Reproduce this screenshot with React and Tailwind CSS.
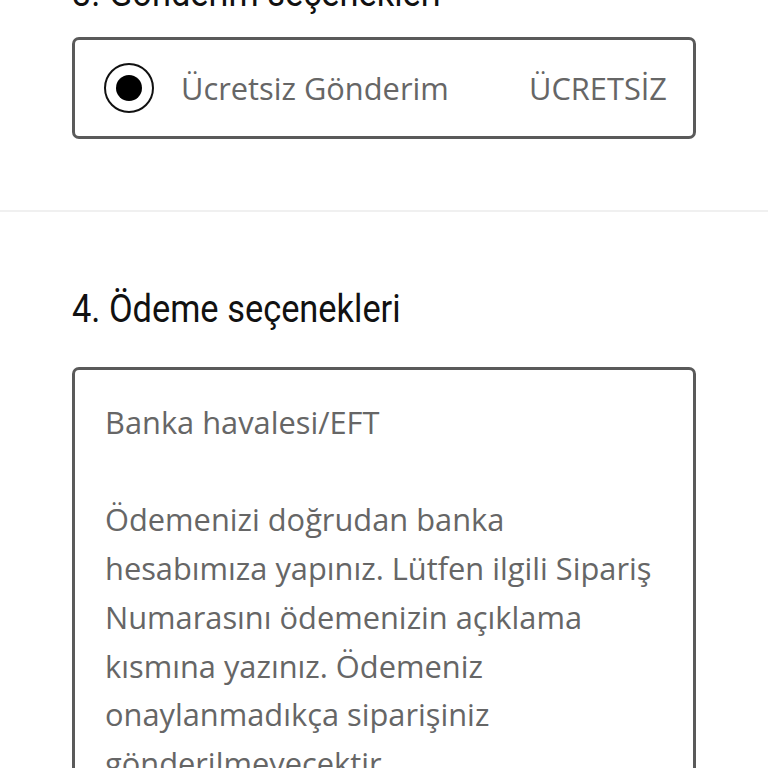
export default function App() {
  const body = { fontFamily: '"Open Sans", sans-serif' };
  const head = { fontFamily: 'Roboto, sans-serif' };
  return (
    <div className="w-[768px] h-[768px] overflow-hidden bg-white">
      <div className="px-[72px] -mt-[30px]">
        <h2 style={head} className="text-[38px] leading-[46px] text-[#111] origin-left scale-x-[0.905] whitespace-nowrap">3. Gönderim seçenekleri</h2>
        <div className="mt-[21px] h-[102px] border-[3px] border-[#5a5a5a] rounded-[7px] flex items-center pl-[29px] pr-[26px]">
          <div className="w-[50px] h-[50px] rounded-full border-[2px] border-[#111] flex items-center justify-center shrink-0">
            <div className="w-[26px] h-[26px] rounded-full bg-black" />
          </div>
          <span style={body} className="ml-[27px] text-[30.8px] text-[#666]">Ücretsiz Gönderim</span>
          <span style={body} className="ml-auto text-[30.8px] text-[#666]">ÜCRETSİZ</span>
        </div>
      </div>
      <div className="mt-[71px] h-[2px] bg-[#f0f0f0]" />
      <div className="px-[72px]">
        <h2 style={head} className="mt-[74px] text-[38px] leading-[46px] text-[#111] origin-left scale-x-[0.905] whitespace-nowrap">4. Ödeme seçenekleri</h2>
        <div style={body} className="mt-[35px] border-[3px] border-[#5a5a5a] rounded-[7px] px-[30px] pt-[28px] pb-[40px] text-[30.8px] leading-[48.7px] text-[#666]">
          <p>Banka havalesi/EFT</p>
          <p className="mt-[48.7px]">Ödemenizi doğrudan banka hesabımıza yapınız. Lütfen ilgili Sipariş Numarasını ödemenizin açıklama kısmına yazınız. Ödemeniz onaylanmadıkça siparişiniz gönderilmeyecektir.</p>
        </div>
      </div>
    </div>
  );
}
